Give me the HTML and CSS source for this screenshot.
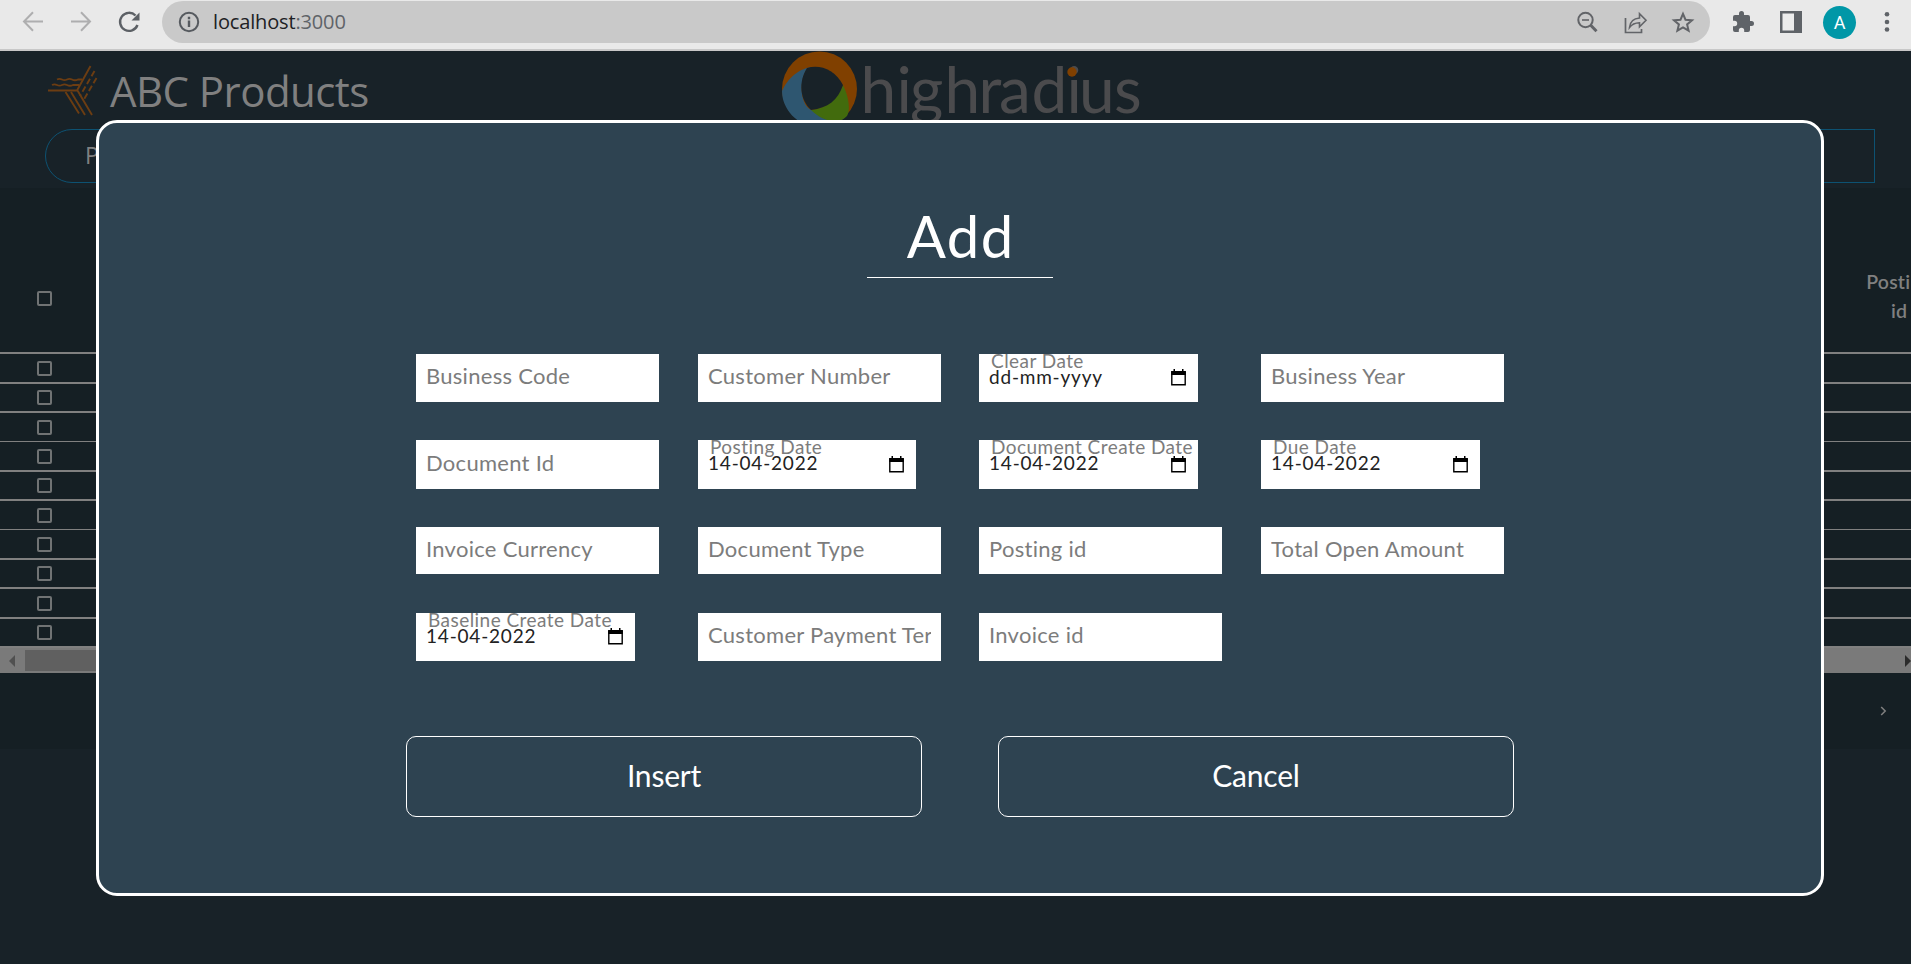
FILE: index.html
```html
<!DOCTYPE html>
<html lang="en">
<head>
<meta charset="utf-8">
<title>ABC Products</title>
<link rel="stylesheet" href="styles.css">
</head>
<body>
<div class="toolbar">
  <svg class="nav" width="160" height="44" viewBox="0 0 160 44" fill="none" stroke-width="2">
    <g stroke="#aeaeaf"><path d="M43 20.500H24.500M33 11.300L24 20.500l9 9.200"/><path d="M71 20.500H89.500M81 11.300l9 9.200-9 9.200"/></g>
    <path d="M135.500 14.500A9 9 0 1 0 137.500 24" stroke="#5c6065" stroke-width="2.400"/>
    <path d="M139.500 11.500v8h-8z" fill="#5c6065"/>
  </svg>
  <div class="address">
    <svg width="22" height="22" viewBox="0 0 22 22"><circle cx="11" cy="11" r="9.200" fill="none" stroke="#565a5f" stroke-width="2"/><path d="M11 9.500v6.500M11 5.800v2.400" stroke="#565a5f" stroke-width="2.400"/></svg>
    <span class="url">localhost<span class="port">:3000</span></span>
    <svg class="tools" width="120" height="24" viewBox="0 0 120 24" fill="none" stroke="#626468">
      <g stroke-width="2"><circle cx="8.500" cy="10" r="7.200"/><path d="M5 10h7" stroke-width="1.600"/><path d="M13.500 15l6 6.200" stroke-width="3"/></g>
      <path d="M48.500 8v14.500H64.500V19" stroke-width="1.700"/>
      <path d="M52.500 17.500C53 12 56.500 8.500 62.500 8V3.700l6.500 6.600-6.500 6.500v-4.100C58 12.800 55 14 52.500 17.500z" stroke-width="1.600"/>
      <path d="M106 3.800l2.500 5.900 6.500.5-4.900 4.200 1.500 6.300-5.600-3.400-5.600 3.400 1.500-6.300-4.900-4.200 6.500-.5z" stroke-width="2"/>
    </svg>
  </div>
  <div class="extras">
    <svg width="24" height="24" viewBox="0 0 24 24" fill="#5f6368"><path d="M20.500 11H19V7a2 2 0 0 0-2-2h-4V3.500a2.500 2.500 0 0 0-5 0V5H4a2 2 0 0 0-2 2v3.800h1.500a2.700 2.700 0 0 1 0 5.400H2V20a2 2 0 0 0 2 2h3.800v-1.500a2.700 2.700 0 0 1 5.400 0V22H17a2 2 0 0 0 2-2v-4h1.500a2.500 2.500 0 0 0 0-5z"/></svg>
    <svg width="22" height="22" viewBox="0 0 22 22"><rect x="1.250" y="1.250" width="19.500" height="19.500" fill="#ececec" stroke="#5f6368" stroke-width="2.500"/><path d="M14 1h7v20h-7z" fill="#5f6368"/></svg>
    <span class="avatar">A</span>
    <svg width="6" height="22" viewBox="0 0 6 22" fill="#5f6368"><circle cx="3" cy="3.300" r="2.300"/><circle cx="3" cy="11" r="2.300"/><circle cx="3" cy="18.500" r="2.300"/></svg>
  </div>
</div>

<main class="page">
  <header class="header">
    <div class="brand">
      <svg width="50" height="52" viewBox="0 0 50 52" fill="none" stroke="#6c3d12" stroke-width="1.900">
        <path d="M0 25.500h29.500M42.500 1L29 25.500M29.500 25.500L44 50"/>
        <path d="M9 14.500c2-1 3-1 5 0s3 1 5 0 3-1 5 0 4 1 6 0h4M4 20c2-1 3-1 5 0s3 1 5 0 3-1 5 0 4 1 6 0h6"/>
        <path d="M46.500 6L32 31" stroke-dasharray="6 3"/><path d="M48.500 13L35 36" stroke-dasharray="6 3"/>
        <path d="M17.500 27L31 48.500M23 27l14 23"/>
      </svg>
      <h1 class="brand-name">ABC Products</h1>
    </div>
    <svg class="logo" width="370" height="80" viewBox="775 51 370 80">
      <circle cx="819.500" cy="89" r="37.500" fill="#804000"/>
      <path d="M782 91C790 74 803 67 815 67C822 67 812 67 807 69C798 82 801 107 812 110C828 121 838 118 845 117C836 126 824 128 818 127C797 126 782 109 782 91z" fill="#2e5670"/>
      <path d="M843 85C850 99 850 112 847 116C839 125 823 122 811 110C828 108 838 98 843 85z" fill="#426b0d"/>
      <path d="M807 68C819 64 835 69 843 85C838 100 828 108 811 110C800 100 798 82 807 68z" fill="#182228"/>
      <text class="wordmark" y="113" x="860.500 896.500 910 944.500 978.500 999 1031.500 1066.500 1079 1114">highradius</text>
      <circle cx="1072" cy="72" r="4.700" fill="#804000"/>
    </svg>
    <div class="actions"><div class="pill">P</div><div class="box"></div></div>
  </header>

  <section class="table">
    <div class="thead"><i class="check"></i><div class="col-name">Posting<br>id</div></div>
    <div class="rows">
      <div class="tr"><i class="check"></i></div><div class="tr"><i class="check"></i></div>
      <div class="tr"><i class="check"></i></div><div class="tr"><i class="check"></i></div>
      <div class="tr"><i class="check"></i></div><div class="tr"><i class="check"></i></div>
      <div class="tr"><i class="check"></i></div><div class="tr"><i class="check"></i></div>
      <div class="tr"><i class="check"></i></div><div class="tr"><i class="check"></i></div>
    </div>
    <div class="scrollbar">
      <svg width="6" height="12" viewBox="0 0 6 12"><path d="M6 0v12L0 6z" fill="#505050"/></svg>
      <div class="thumb"></div>
      <svg width="6" height="12" viewBox="0 0 6 12"><path d="M0 0v12l6-6z" fill="#2b2b2b"/></svg>
    </div>
    <div class="pager"><svg width="7" height="10" viewBox="0 0 7 10"><path d="M1.200 1l4 4-4 4" fill="none" stroke="#808080" stroke-width="1.500"/></svg></div>
  </section>
</main>

<div class="modal">
  <h2 class="title">Add</h2>
  <form class="fields">
    <input class="field" placeholder="Business Code">
    <input class="field" placeholder="Customer Number">
    <div class="date"><label>Clear Date</label><span>dd-mm-yyyy</span><svg class="cal" viewBox="0 0 15 17"><path d="M.8 3h13.400v12.700H.8z" fill="none" stroke="#000" stroke-width="1.400"/><path d="M.2 2h14.600v4H.2zM2.500 0h1.500v3h-1.500zM11 0h1.500v3h-1.500z"/></svg></div>
    <input class="field" placeholder="Business Year">

    <input class="field" placeholder="Document Id">
    <div class="date"><label>Posting Date</label><span>14-04-2022</span><svg class="cal" viewBox="0 0 15 17"><path d="M.8 3h13.400v12.700H.8z" fill="none" stroke="#000" stroke-width="1.400"/><path d="M.2 2h14.600v4H.2zM2.500 0h1.500v3h-1.500zM11 0h1.500v3h-1.500z"/></svg></div>
    <div class="date"><label>Document Create Date</label><span>14-04-2022</span><svg class="cal" viewBox="0 0 15 17"><path d="M.8 3h13.400v12.700H.8z" fill="none" stroke="#000" stroke-width="1.400"/><path d="M.2 2h14.600v4H.2zM2.500 0h1.500v3h-1.500zM11 0h1.500v3h-1.500z"/></svg></div>
    <div class="date"><label>Due Date</label><span>14-04-2022</span><svg class="cal" viewBox="0 0 15 17"><path d="M.8 3h13.400v12.700H.8z" fill="none" stroke="#000" stroke-width="1.400"/><path d="M.2 2h14.600v4H.2zM2.500 0h1.500v3h-1.500zM11 0h1.500v3h-1.500z"/></svg></div>

    <input class="field" placeholder="Invoice Currency">
    <input class="field" placeholder="Document Type">
    <input class="field" placeholder="Posting id">
    <input class="field" placeholder="Total Open Amount">

    <div class="date"><label>Baseline Create Date</label><span>14-04-2022</span><svg class="cal" viewBox="0 0 15 17"><path d="M.8 3h13.400v12.700H.8z" fill="none" stroke="#000" stroke-width="1.400"/><path d="M.2 2h14.600v4H.2zM2.500 0h1.500v3h-1.500zM11 0h1.500v3h-1.500z"/></svg></div>
    <input class="field" placeholder="Customer Payment Terms">
    <input class="field" placeholder="Invoice id">
  </form>
  <div class="buttons"><button class="btn">Insert</button><button class="btn">Cancel</button></div>
</div>
</body>
</html>
```
FILE: styles.css
```css
* { box-sizing: border-box; }
body { margin: 0; height: 964px; overflow: hidden; background: #182228; font-family: Lato, "Open Sans", sans-serif; }
svg { display: block; flex: none; }

/* Browser toolbar */
.toolbar { height: 51px; background: #e9e9e9; border-bottom: 2px solid #c8c8c8; display: flex; padding-top: 1px; }
.nav { margin-right: 2px; }
.address { width: 1548px; height: 42px; border-radius: 21px; background: #c9c9c9; display: flex; align-items: center; padding: 0 13px 0 16px; }
.url { margin-left: 13px; font: 400 20px/42px "Open Sans", sans-serif; letter-spacing: -0.150px; color: #202124; flex: 1; }
.port { color: #5f6368; }
.extras { height: 42px; display: flex; align-items: center; margin-left: 21px; }
.extras > :nth-child(2) { margin-left: 25px; }
.avatar { width: 33px; height: 33px; border-radius: 50%; background: #0097a7; color: #fff; font: 400 18px/33px Roboto, sans-serif; text-align: center; margin: 1px 28px 0 21px; }

/* Dimmed page behind the dialog */
.header { height: 137px; display: grid; grid-template-columns: 775px 1fr; grid-template-rows: 78px 54px; background: #182228; }
.brand { display: flex; padding: 14px 0 0 48px; }
.brand-name { margin: -4px 0 0 12px; font: 400 42px/60px "Open Sans", sans-serif; letter-spacing: -0.550px; color: #808080; }
.wordmark { font: 400 64px Lato, sans-serif; fill: #4b4b4d; }
.actions { grid-column: 1 / 3; display: flex; margin: 0 36px 0 45px; }
.pill { width: 500px; height: 54px; border: 1px solid #0d5272; border-radius: 27px; padding-left: 39px; font: 500 23px/51px "Open Sans", sans-serif; color: #808080; }
.box { flex: 1; height: 54px; border: 1px solid #0d5272; }
.table { height: 561px; background: #151f24; }
.thead { height: 164px; display: flex; justify-content: space-between; overflow: hidden; padding: 103px 0 0 37px; }
.check { display: block; width: 15px; height: 15px; border: 2px solid #707374; border-radius: 2px; flex: none; }
.col-name { width: 66px; margin: -24px -21px 0 0; text-align: center; font-size: 19.500px; line-height: 29px; font-weight: 600; letter-spacing: 0.200px; color: #808080; }
.tr { height: 29px; border-top: 2px solid #808080; padding-left: 37px; display: flex; align-items: center; }
.tr:nth-child(1), .tr:nth-child(3), .tr:nth-child(6), .tr:nth-child(9) { height: 30px; }
.tr:nth-child(4), .tr:nth-child(7) { border-top-width: 1px; }
.scrollbar { height: 27px; background: #7a7a7a; border-top: 2px solid #808080; display: flex; align-items: center; padding: 0 0 0 9px; gap: 10px; }
.thumb { width: 1500px; height: 21px; background: #606060; margin-right: auto; }
.pager { display: flex; justify-content: flex-end; padding: 33px 24px 0 0; }

/* Dialog */
.modal { position: absolute; left: 96px; top: 120px; width: 1728px; height: 776px; border: 3px solid #fff; border-radius: 21px; background: #2e4351; color: #fff; padding-top: 75px; display: flex; flex-direction: column; align-items: center; }
.title { margin: 0; width: 186px; height: 80px; border-bottom: 1px solid #fff; text-align: center; font-size: 58px; line-height: 75px; font-weight: 400; letter-spacing: 1.500px; text-indent: 1.500px; }
.fields { margin: 76px 0 0; width: 1088px; display: grid; grid-template-columns: 282px 281px 282px 243px; grid-template-rows: 86px 87px 86px 48px; }
.field, .date { width: 243px; height: 48px; border: 0; background: #fff; margin: 0; }
.field { padding: 0 10px 5px; font: 400 22px Lato, sans-serif; letter-spacing: 0.280px; border-radius: 0; }
.field::placeholder { color: #7c7c7c; opacity: 1; }
.date { position: relative; width: 219px; padding: 1px 0 0 10px; color: #222; font-size: 19px; line-height: 16px; }
.date label { display: block; color: #7c7c7c; letter-spacing: 0.450px; padding-left: 2px; white-space: nowrap; line-height: 12px; }
.date span { display: block; letter-spacing: 0.800px; margin-top: 2px; }
.cal { position: absolute; right: 12px; top: 15px; width: 15px; height: 17px; }
.fields > :nth-child(n+5):nth-child(-n+8) { height: 49px; }
.fields > :nth-child(6) { width: 218px; }
.fields > :nth-child(n+5):nth-child(-n+8) .cal { top: 16px; }
.fields > :nth-child(n+9):nth-child(-n+12) { height: 47px; }
.buttons { display: flex; gap: 76px; margin-top: 75px; }
.btn { width: 516px; height: 81px; border: 1px solid #fff; border-radius: 10px; background: none; color: #fff; font: 400 30px Lato, sans-serif; letter-spacing: -0.200px; padding: 0 0 3px; }
```
